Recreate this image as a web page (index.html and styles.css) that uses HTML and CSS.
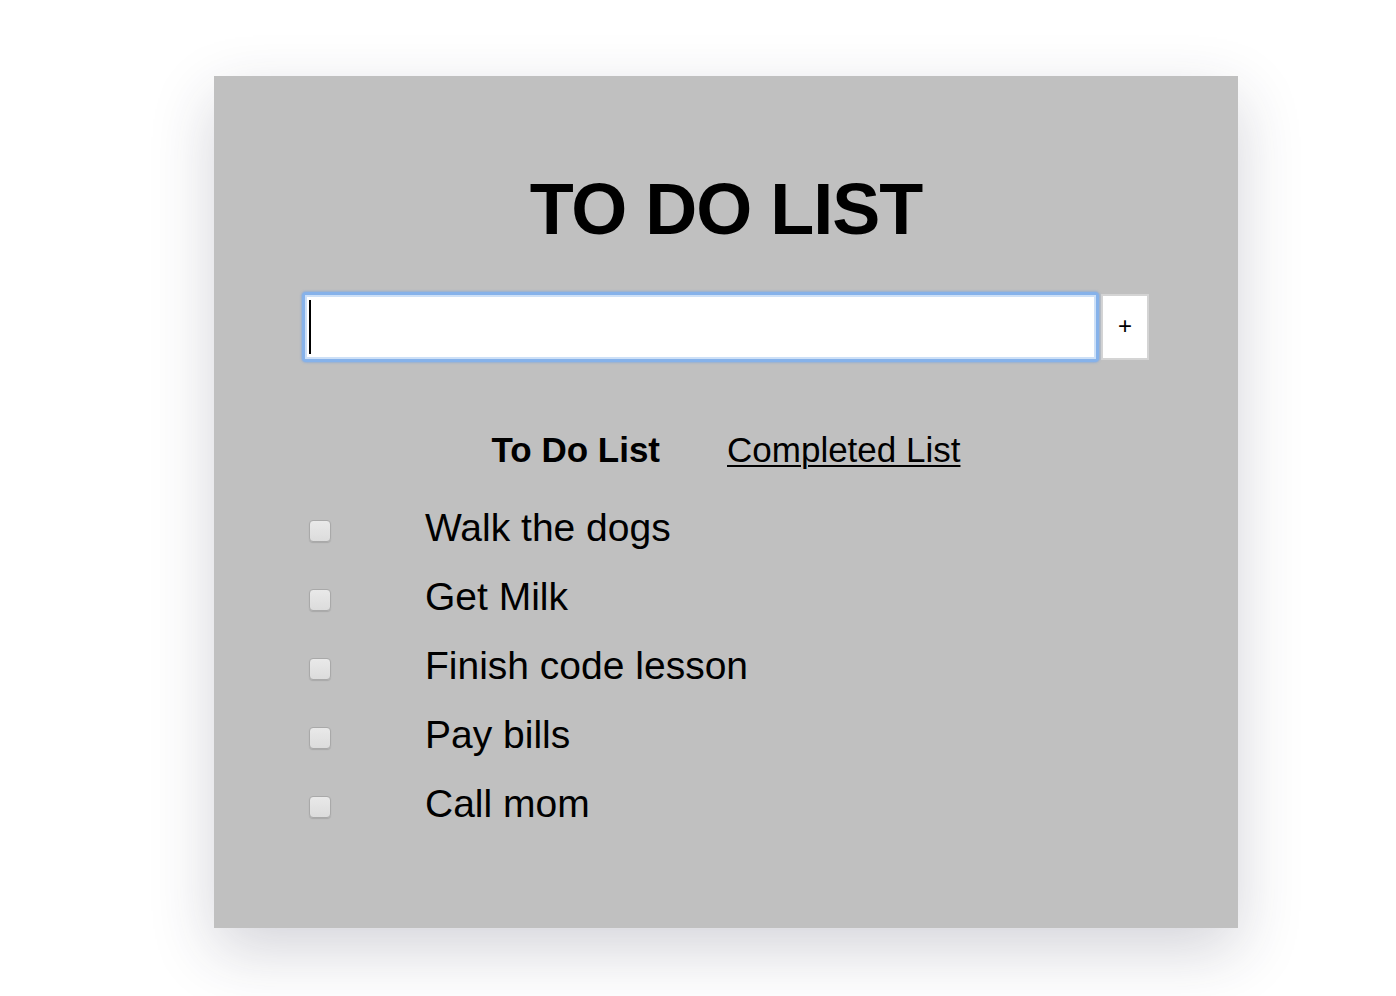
FILE: index.html
```html
<!DOCTYPE html>
<html>
<head>
<meta charset="utf-8">
<title>To Do List</title>
<link rel="stylesheet" href="styles.css">
</head>
<body>
<div class="card">
  <h1 class="title">TO DO LIST</h1>
  <div class="entry">
    <div class="field">
      <input class="field-input" type="text" aria-label="New task">
      <span class="caret"></span>
    </div>
    <button class="add-btn" type="button">+</button>
  </div>
  <nav class="tabs">
    <span class="tab tab-active">To Do List</span>
    <a class="tab tab-link" href="#">Completed List</a>
  </nav>
  <ul class="tasks">
    <li class="task"><span class="check"></span><span class="task-text">Walk the dogs</span></li>
    <li class="task"><span class="check"></span><span class="task-text">Get Milk</span></li>
    <li class="task"><span class="check"></span><span class="task-text">Finish code lesson</span></li>
    <li class="task"><span class="check"></span><span class="task-text">Pay bills</span></li>
    <li class="task"><span class="check"></span><span class="task-text">Call mom</span></li>
  </ul>
</div>
</body>
</html>
```
FILE: styles.css
```css
html, body {
  margin: 0;
  padding: 0;
  background: #ffffff;
}
body {
  font-family: "Liberation Sans", Arial, sans-serif;
  color: #000;
  padding-top: 76px;
  height: 920px;
  overflow: hidden;
}
.card {
  box-sizing: border-box;
  width: 1024px;
  height: 852px;
  margin-left: 214px;
  background: #c0c0c0;
  box-shadow: 0 22px 60px rgba(40, 40, 70, 0.2);
  padding: 96px 0 0 0;
}
.title {
  margin: 0;
  font-size: 72px;
  line-height: 74px;
  font-weight: 700;
  letter-spacing: -1px;
  text-align: center;
}
.entry {
  display: flex;
  align-items: center;
  margin: 46px 0 0 88px;
  height: 70px;
}
.field {
  position: relative;
  width: 797px;
  height: 70px;
  box-sizing: border-box;
  border-radius: 4px;
  background: #86b2ea;
  padding: 3px;
  box-shadow: 0 0 2px 1px rgba(110, 160, 230, 0.5);
}
.field-input {
  display: block;
  box-sizing: border-box;
  width: 100%;
  height: 100%;
  border: 2px solid #cde0f7;
  background: #fff;
  outline: none;
  margin: 0;
  padding: 0 6px;
  font-family: "Liberation Sans", Arial, sans-serif;
  font-size: 30px;
}
.caret {
  position: absolute;
  left: 7px;
  top: 8px;
  width: 2px;
  height: 54px;
  background: #000;
}
.add-btn {
  box-sizing: border-box;
  width: 48px;
  height: 66px;
  margin-left: 2px;
  border: 2px solid #d4d4d4;
  background: #fff;
  font-family: "Liberation Sans", Arial, sans-serif;
  font-size: 24px;
  color: #000;
  padding: 0 0 2px 0;
  line-height: 1;
}
.tabs {
  display: flex;
  justify-content: center;
  gap: 67px;
  margin-top: 70px;
  font-size: 35px;
  line-height: 35px;
}
.tab {
  color: #000;
}
.tab-active {
  font-weight: 700;
}
.tab-link {
  text-decoration: underline;
  text-underline-offset: 3px;
  text-decoration-thickness: 2px;
}
.tasks {
  list-style: none;
  margin: 26px 0 0 0;
  padding: 0 0 0 95px;
}
.task {
  display: flex;
  align-items: center;
  height: 69px;
  font-size: 39px;
  line-height: 69px;
}
.check {
  box-sizing: border-box;
  width: 22px;
  height: 22px;
  margin-top: 6px;
  border-radius: 4px;
  border: 1px solid #a9a9a9;
  background: linear-gradient(#e9e9e9, #dcdcdc);
  box-shadow: 0 1px 1px rgba(0, 0, 0, 0.12);
  flex: none;
}
.task-text {
  margin-left: 94px;
}
```
